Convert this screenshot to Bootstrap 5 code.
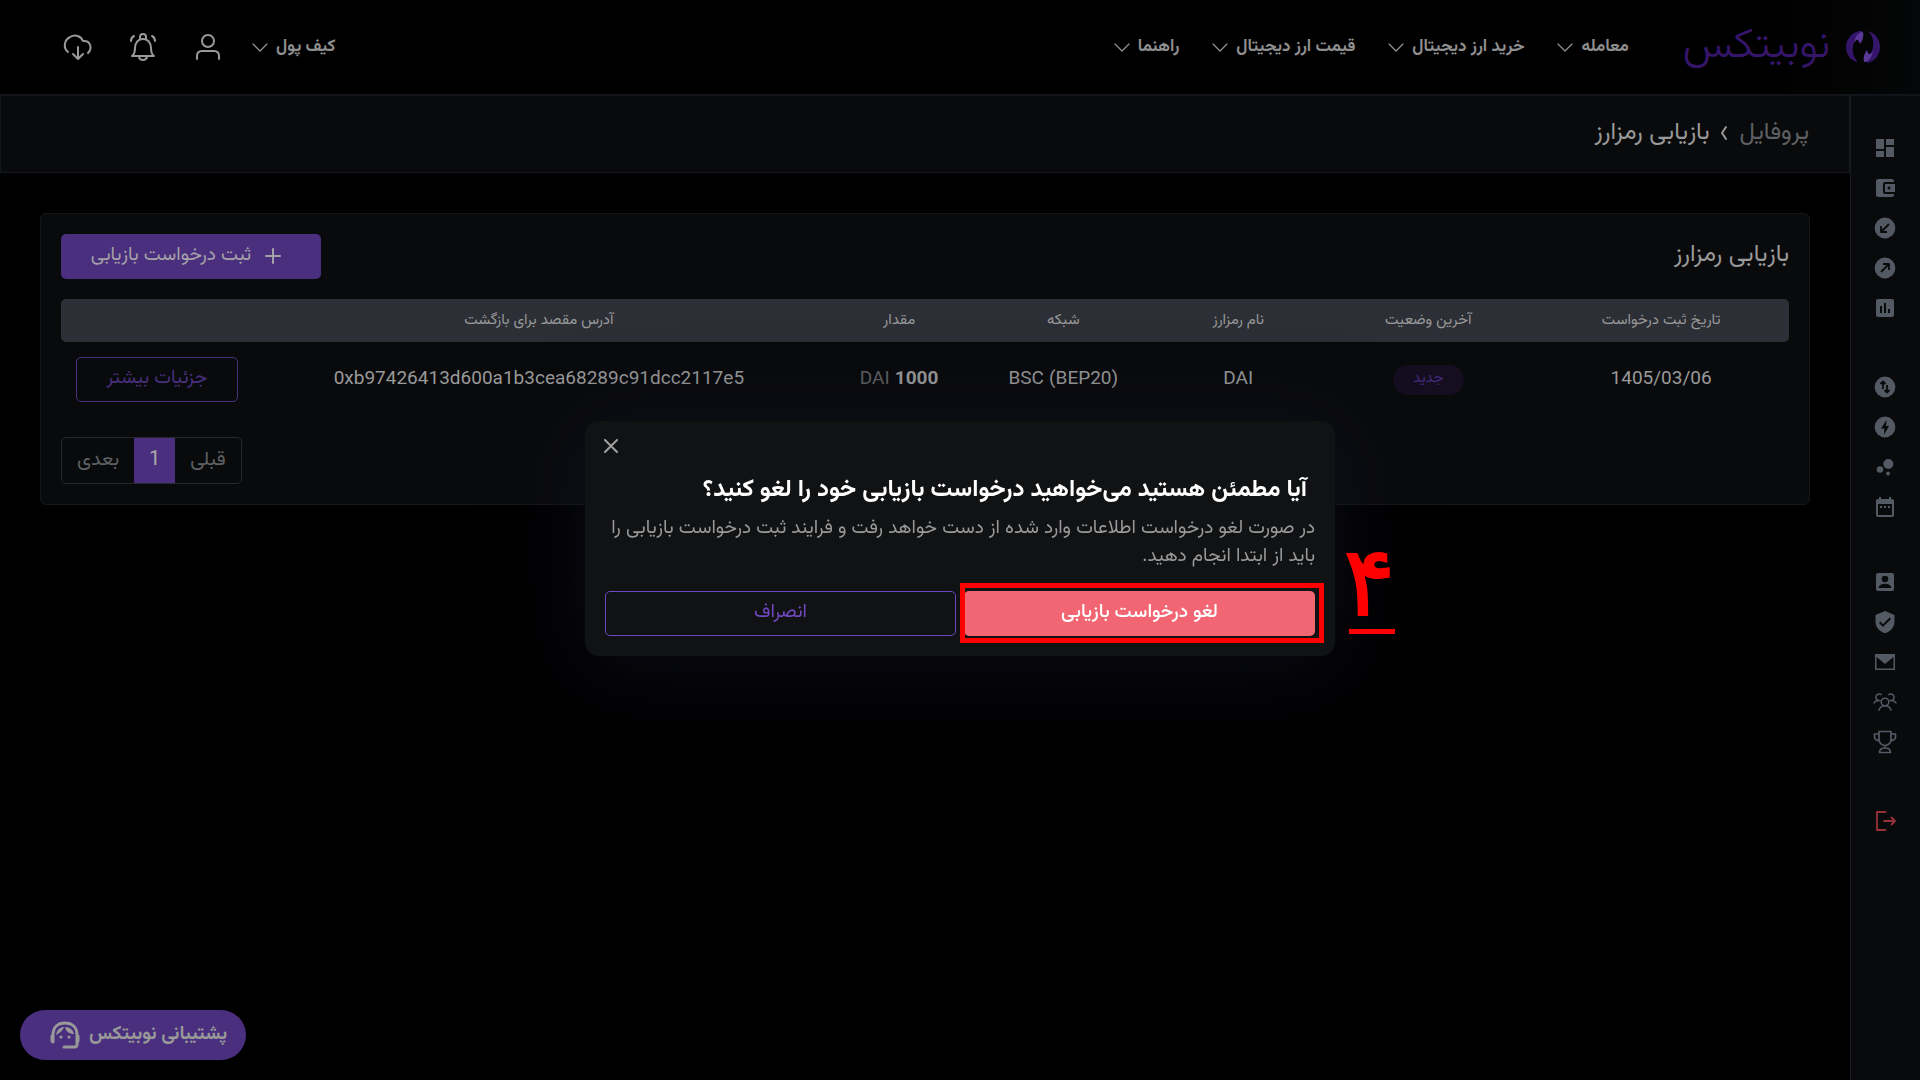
<!DOCTYPE html>
<html lang="fa" dir="rtl">
<head>
<meta charset="utf-8">
<meta name="viewport" content="width=device-width, initial-scale=1">
<title>بازیابی رمزارز</title>
<link rel="stylesheet" href="https://cdn.jsdelivr.net/npm/bootstrap@5.3.0/dist/css/bootstrap.min.css">
<style>
:root{--panel:#090a0c;--line:#14171b;--ink:#999;--dim:#5f6063;--violet:#4a2f7e;--icon:#545a64}
body{background:#000;color:var(--ink);font-family:Vazirmatn,Roboto,"DejaVu Sans",sans-serif;font-size:19px;line-height:28px}
a{color:inherit;text-decoration:none}
svg{display:block;flex-shrink:0;fill:none;stroke:currentColor;stroke-linecap:round;stroke-linejoin:round}
.topbar{height:96px;padding:0 40px 0 62px;border-bottom:2px solid #11151a;background:linear-gradient(to right,#000 92%,#050607)}
.brand{color:#351569;gap:16px;margin-left:54px}
.brand-word{font-size:42px;line-height:48px;font-weight:300}
.menu{gap:33px}
.menu-link{font-size:17px;font-weight:700;gap:8px;color:#8f8f8f}
.tools{gap:33px}
.tools .menu-link{margin-left:-5px}
.tool-btn{color:#999;background:none;border:0;padding:0}
.side{width:70px;background:var(--panel);border-left:1px solid #1a1c20;color:var(--icon);padding:32px 1px 0 0}
.side-link{height:40px}
.side-link svg{fill:currentColor;stroke:none}
.side-link svg.outlined{fill:none;stroke:currentColor}
.side-gap{margin-top:39px}
.side-gap-sm{margin-top:35px}
.side-exit{color:#98323a}
.crumbs{height:77px;background:var(--panel);border:1px solid var(--line);border-top:0;padding:0 40px 2px;font-size:24px;gap:10px}
.crumb-up{color:var(--dim)}
.page-body{padding:40px}
.panel{background:var(--panel);border:1px solid var(--line);border-radius:6px;padding:20px}
.panel-title{font-size:24px;line-height:42px;font-weight:400}
.act{height:45px;border-radius:5px;font-size:19px;line-height:28px;padding:6px 28px}
.act-fill,.act-fill:hover{background:var(--violet);color:#a5a1a8}
.act-line{border:1px solid var(--violet);color:var(--violet)}
.act-cancel{border:1px solid #7148c0;color:#7148c0}
.act-danger,.act-danger:hover{background:#f16672;color:#fff;font-weight:500}
.create{width:260px;gap:14px;padding:6px 38px 8px 28px}
.grid-table{table-layout:fixed;text-align:center;width:100%;margin:20px 0 0}
.grid-table th{background:#2d2f36;height:43px;font-size:15px;line-height:24px;font-weight:400;padding:0;color:#999}
.grid-table th:first-child{border-radius:0 5px 5px 0}
.grid-table th:last-child{border-radius:5px 0 0 5px}
.grid-table td{height:74px;padding:2px 15px 0;vertical-align:middle}
.grid-table td:last-child{padding-top:0}
.tag-new{background:#140e20;color:#43297b;border-radius:15px;font-size:15px;line-height:28px;padding:0 20px 2px}
.pager{border:1px solid #26282b;border-radius:5px;overflow:hidden;height:47px;width:max-content;margin:21px auto 0 0;padding:0;font-size:20px}
.pager a{padding:0 15px;line-height:44px;display:block;color:var(--dim)}
.pager a.now{background:var(--violet);color:#aaa}
.veil{z-index:5;padding-bottom:4px}
.dialog{width:750px;background:#111214;border-radius:14px;padding:18px 20px 20px;box-shadow:0 10px 90px 10px rgba(22,24,44,.45);color:#999}
.dialog-x{background:none;border:0;padding:0;color:#a0a0a0;margin:0 auto 0 -1px;width:14px}
.dialog-title{color:#fff;font-size:24px;line-height:34px;font-weight:700;padding-right:8px;margin:20px 0 8px}
.dialog-text{margin:0 0 20px}
.hint-box{border:5px solid red;inset:-8px -9px -7px -4px}
.hint-no{color:red;left:764px;top:114px;width:46px;font-family:"DejaVu Sans",sans-serif;font-size:96px;line-height:94px;border-bottom:5px solid red;text-align:center;height:99px;-webkit-text-stroke:2px red}
.help{left:20px;bottom:20px;height:50px;border:0;border-radius:25px;background:var(--violet);color:#999;font-size:19px;font-weight:700;padding:0 19px 0 30px;gap:9px;z-index:6}
</style>
</head>
<body class="min-vh-100 d-flex flex-column">
<header class="topbar d-flex align-items-center">
  <a class="brand d-flex align-items-center" href="#">
    <svg width="34" height="32" viewBox="0 0 34 32"><g stroke="none"><path fill="#351569" d="M13 0C5 2 0 9 0 16c0 8 5 14 12 15C8 27 6 22 7 16 8 9 11 5 13 12c3-3 4-9 3-12z"/><path fill="#351569" d="M22 0c7 2 12 8 12 16s-5 14-12 16c-2-1-4-6-1-12 1 5 5 3 6-4 1-7-1-12-5-16z"/><path fill="#5c3996" d="M17 1c-5 0-8 5-9 11 2-4 5-5 6 1 3-4 4-8 3-12zM18 31c5 0 8-5 9-11-2 4-5 5-6-1-3 4-4 8-3 12z"/></g></svg>
    <span class="brand-word">نوبیتکس</span>
  </a>
  <nav class="menu d-flex">
    <a class="menu-link d-flex align-items-center" href="#">معامله <svg width="16" height="9" viewBox="0 0 16 9" stroke-width="1.300"><path d="M1 1l7 7 7-7"/></svg></a>
    <a class="menu-link d-flex align-items-center" href="#">خرید ارز دیجیتال <svg width="16" height="9" viewBox="0 0 16 9" stroke-width="1.300"><path d="M1 1l7 7 7-7"/></svg></a>
    <a class="menu-link d-flex align-items-center" href="#">قیمت ارز دیجیتال <svg width="16" height="9" viewBox="0 0 16 9" stroke-width="1.300"><path d="M1 1l7 7 7-7"/></svg></a>
    <a class="menu-link d-flex align-items-center" href="#">راهنما <svg width="16" height="9" viewBox="0 0 16 9" stroke-width="1.300"><path d="M1 1l7 7 7-7"/></svg></a>
  </nav>
  <div class="tools d-flex align-items-center me-auto">
    <a class="menu-link d-flex align-items-center" href="#">کیف پول <svg width="16" height="9" viewBox="0 0 16 9" stroke-width="1.300"><path d="M1 1l7 7 7-7"/></svg></a>
    <button class="tool-btn" aria-label="حساب"><svg width="32" height="32" viewBox="0 0 32 32" stroke-width="2"><circle cx="16" cy="10" r="6"/><path d="M5 28v-3c0-3 2-5 5-5h12c3 0 5 2 5 5v3"/></svg></button>
    <button class="tool-btn" aria-label="اعلان‌ها"><svg width="32" height="32" viewBox="0 0 32 32" stroke-width="2"><path d="M5 25c3-2 3-5 3-8 0-5 3-9 8-9s8 4 8 9c0 3 0 6 3 8zM13 8V6c0-4 6-4 6 0v2M12 26c1 4 7 4 8 0M4 10c0-2 1-4 3-5M28 10c0-2-1-4-3-5"/></svg></button>
    <button class="tool-btn" aria-label="دریافت"><svg width="32" height="32" viewBox="0 0 32 32" stroke-width="2"><path d="M6 21c-5-4-4-12 2-15 5-3 11-1 13 4 7-1 10 7 5 12M16 16v12M11 23l5 5 5-5"/></svg></button>
  </div>
</header>
<div class="d-flex flex-grow-1">
  <aside class="side flex-shrink-0">
    <a class="side-link d-flex align-items-center justify-content-center" href="#" aria-label="داشبورد"><svg width="24" height="24" viewBox="0 0 24 24"><path d="M3 13h8V3H3zm0 8h8v-6H3zm10 0h8V11h-8zm0-18v6h8V3z"/></svg></a>
    <a class="side-link d-flex align-items-center justify-content-center" href="#" aria-label="کیف پول"><svg width="24" height="24" viewBox="0 0 24 24"><path d="M21 18v1c0 1-1 2-2 2H5c-1 0-2-1-2-2V5c0-1 1-2 2-2h14c1 0 2 1 2 2v1h-9c-1 0-2 1-2 2v8c0 1 1 2 2 2zm-9-2h10V8H12zm4-2.500a1.500 1.500 0 110-3 1.500 1.500 0 010 3z"/></svg></a>
    <a class="side-link d-flex align-items-center justify-content-center" href="#" aria-label="واریز"><svg width="24" height="24" viewBox="0 0 24 24"><circle cx="12" cy="12" r="10.400"/><path d="M16 8l-8 8m0-6v6h6" fill="none" stroke="#090a0c" stroke-width="1.800" stroke-linecap="butt"/></svg></a>
    <a class="side-link d-flex align-items-center justify-content-center" href="#" aria-label="برداشت"><svg width="24" height="24" viewBox="0 0 24 24"><circle cx="12" cy="12" r="10.400"/><path d="M8 16l8-8m-6 0h6v6" fill="none" stroke="#090a0c" stroke-width="1.800" stroke-linecap="butt"/></svg></a>
    <a class="side-link d-flex align-items-center justify-content-center" href="#" aria-label="گزارش"><svg width="24" height="24" viewBox="0 0 24 24"><path d="M19 3H5a2 2 0 00-2 2v14a2 2 0 002 2h14a2 2 0 002-2V5a2 2 0 00-2-2zM9 17H7v-7h2zm4 0h-2V7h2zm4 0h-2v-4h2z"/></svg></a>
    <a class="side-link side-gap d-flex align-items-center justify-content-center" href="#" aria-label="تبدیل"><svg width="24" height="24" viewBox="0 0 24 24"><circle cx="12" cy="12" r="10.400"/><path d="M10 14V7M7.500 9L10 6.500 12.500 9M14 10v7M11.500 15l2.500 2.500 2.500-2.500" fill="none" stroke="#090a0c" stroke-width="1.800" stroke-linecap="butt"/></svg></a>
    <a class="side-link d-flex align-items-center justify-content-center" href="#" aria-label="آنی"><svg width="24" height="24" viewBox="0 0 24 24"><circle cx="12" cy="12" r="10.400"/><path fill="#090a0c" d="M13.500 5L8 13.500h3.200v6L16 11h-3z"/></svg></a>
    <a class="side-link d-flex align-items-center justify-content-center" href="#" aria-label="استخر"><svg width="24" height="24" viewBox="0 0 24 24"><circle cx="7" cy="14.500" r="3.300"/><circle cx="15.300" cy="9" r="5"/><circle cx="15" cy="18.500" r="2"/></svg></a>
    <a class="side-link d-flex align-items-center justify-content-center" href="#" aria-label="تقویم"><svg width="24" height="24" viewBox="0 0 24 24"><path d="M9 11H7v2h2zm4 0h-2v2h2zm4 0h-2v2h2zm2-7h-1V2h-2v2H8V2H6v2H5a2 2 0 00-2 2v14a2 2 0 002 2h14a2 2 0 002-2V6a2 2 0 00-2-2zm0 16H5V9h14z"/></svg></a>
    <a class="side-link side-gap-sm d-flex align-items-center justify-content-center" href="#" aria-label="پروفایل"><svg width="24" height="24" viewBox="0 0 24 24"><path d="M3 5v14a2 2 0 002 2h14a2 2 0 002-2V5a2 2 0 00-2-2H5a2 2 0 00-2 2z"/><circle cx="12" cy="9" r="3.300" fill="#090a0c"/><path fill="#090a0c" d="M5.500 18c0-2.700 4-4.200 6.500-4.200s6.500 1.500 6.500 4.200z"/></svg></a>
    <a class="side-link d-flex align-items-center justify-content-center" href="#" aria-label="امنیت"><svg width="24" height="24" viewBox="0 0 24 24"><path d="M12 1L2.500 5v6.500c0 5.500 4 10.300 9.500 11.700 5.500-1.400 9.500-6.200 9.500-11.700V5zm-2 16l-4-4 1.400-1.400L10 14.200l6.600-6.600L18 9z"/></svg></a>
    <a class="side-link d-flex align-items-center justify-content-center" href="#" aria-label="پیام"><svg width="24" height="24" viewBox="0 0 24 24"><path d="M2 4h20v16H2zm1.500 3v11.500h17V7L12 14z"/></svg></a>
    <a class="side-link d-flex align-items-center justify-content-center" href="#" aria-label="معرفی"><svg class="outlined" width="24" height="24" viewBox="0 0 24 24" stroke-width="1.500"><circle cx="12" cy="12" r="3.800"/><path d="M6 20c1-3 3-4.200 6-4.200S17 17 18 20M7 10.500A3.300 3.300 0 118 4.500M17 10.500a3.300 3.300 0 10-1-6M1 13c1-2 3-2.500 5.500-2.500M23 13c-1-2-3-2.500-5.500-2.500"/></svg></a>
    <a class="side-link d-flex align-items-center justify-content-center" href="#" aria-label="جوایز"><svg class="outlined" width="24" height="24" viewBox="0 0 24 24" stroke-width="1.700"><path d="M6 1.500h12v8c0 3-2.500 6-6 6s-6-3-6-6zM6 4H1.500v3c0 2 2 3.500 4.700 3.500M18 4h4.500v3c0 2-2 3.500-4.700 3.500M12 15.500V18M6.500 22.500c0-3 1.500-4.500 5.500-4.500s5.500 1.500 5.500 4.500z"/></svg></a>
    <a class="side-link side-gap side-exit d-flex align-items-center justify-content-center" href="#" aria-label="خروج"><svg class="outlined" width="24" height="24" viewBox="0 0 24 24" stroke-width="1.800"><path d="M12.500 3H4v18h8.500M11 12h11M18.500 8.500L22 12l-3.500 3.500"/></svg></a>
  </aside>
  <main class="flex-grow-1">
    <nav class="crumbs d-flex align-items-center">
      <a class="crumb-up" href="#">پروفایل</a>
      <svg width="10" height="16" viewBox="0 0 10 16" stroke-width="2"><path d="M7 2L3 8l4 6"/></svg>
      <span>بازیابی رمزارز</span>
    </nav>
    <div class="page-body">
      <section class="panel">
        <div class="d-flex justify-content-between">
          <h1 class="panel-title m-0">بازیابی رمزارز</h1>
          <button class="btn act act-fill create d-flex align-items-center justify-content-center"><svg width="16" height="16" viewBox="0 0 16 16" stroke-width="2"><path d="M8 1v14M1 8h14"/></svg>ثبت درخواست بازیابی</button>
        </div>
        <table class="grid-table">
          <colgroup><col style="width:14.8%"><col style="width:12.15%"><col style="width:9.85%"><col style="width:10.4%"><col style="width:8.6%"><col style="width:33.1%"><col style="width:11.1%"></colgroup>
          <thead><tr><th>تاریخ ثبت درخواست</th><th>آخرین وضعیت</th><th>نام رمزارز</th><th>شبکه</th><th>مقدار</th><th>آدرس مقصد برای بازگشت</th><th></th></tr></thead>
          <tbody><tr>
            <td dir="ltr">1405/03/06</td>
            <td><span class="tag-new d-inline-block align-middle">جدید</span></td>
            <td>DAI</td>
            <td dir="ltr">BSC (BEP20)</td>
            <td dir="ltr" class="px-0"><span class="crumb-up">DAI</span> <b>1000</b></td>
            <td dir="ltr">0xb97426413d600a1b3cea68289c91dcc2117e5</td>
            <td><button class="btn act act-line w-100">جزئیات بیشتر</button></td>
          </tr></tbody>
        </table>
        <nav class="pager d-flex" aria-label="صفحه‌ها">
          <a href="#">قبلی</a><a class="now" href="#">1</a><a href="#">بعدی</a>
        </nav>
      </section>
    </div>
  </main>
</div>
<div class="veil position-fixed top-0 start-0 w-100 h-100 d-flex align-items-center justify-content-center">
  <div class="dialog position-relative" role="dialog" aria-labelledby="ask">
    <button class="dialog-x d-block" aria-label="بستن"><svg width="14" height="14" viewBox="0 0 14 14" stroke-width="2"><path d="M1 1l12 12M13 1L1 13"/></svg></button>
    <h2 class="dialog-title" id="ask">آیا مطمئن هستید می‌خواهید درخواست بازیابی خود را لغو کنید؟</h2>
    <p class="dialog-text">در صورت لغو درخواست اطلاعات وارد شده از دست خواهد رفت و فرایند ثبت درخواست بازیابی را باید از ابتدا انجام دهید.</p>
    <div class="row gx-2">
      <div class="col"><div class="position-relative"><button class="btn act act-danger w-100">لغو درخواست بازیابی</button><span class="hint-box position-absolute"></span></div></div>
      <div class="col"><button class="btn act act-cancel w-100">انصراف</button></div>
    </div>
    <span class="hint-no position-absolute">۴</span>
  </div>
</div>
<button class="help position-fixed d-flex align-items-center">پشتیبانی نوبیتکس
  <svg width="30" height="28" viewBox="0 0 30 28" stroke-width="3"><path d="M3 21v-7C3 6 8 2 15 2s12 4 12 12v7M28 15v5M2 15v5M27 19v5c0 1-1 2-2 2H14"/><path fill="currentColor" stroke="none" d="M6 14c1-6 5-8 8-8-1 3-4 6-8 8zM15 6c5 0 8 3 9 7-4 0-8-2-9-7z"/><g fill="currentColor" stroke="none"><circle cx="11" cy="16" r="1.600"/><circle cx="19" cy="16" r="1.600"/></g></svg>
</button>
<script src="https://cdn.jsdelivr.net/npm/bootstrap@5.3.0/dist/js/bootstrap.bundle.min.js"></script>
</body>
</html>
